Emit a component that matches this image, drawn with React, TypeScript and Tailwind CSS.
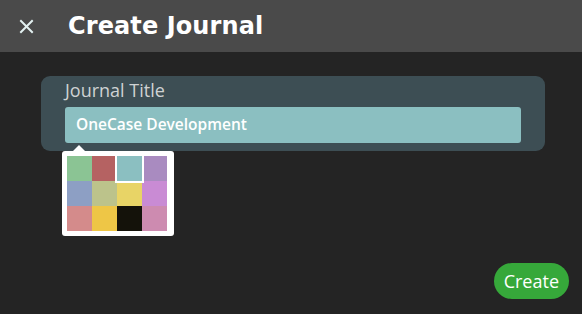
import React, { useState } from 'react'

const swatches = [
    '#8bc494', '#b56262', '#8bbfc1', '#a98bc0',
    '#8d9fc4', '#bcc38b', '#e8d466', '#c98bd4',
    '#d48b8b', '#eec646', '#14120a', '#cd8bb0',
]

const App = () => {
    const [selected, setSelected] = useState(2)
    const [title, setTitle] = useState('OneCase Development')

    return (
        <div className="w-[582px] h-[314px] bg-[#242424] flex flex-col overflow-hidden" style={{ fontFamily: '"Open Sans", sans-serif' }}>
            {/* Header */}
            <div className="h-[52px] shrink-0 bg-[#4a4a4a] flex items-center pl-[18px]">
                <button className="w-[16px] h-[16px] flex items-center justify-center text-[#e3f1f1]">
                    <svg width="15" height="15" viewBox="0 0 15 15" fill="none" stroke="currentColor" strokeWidth="2" strokeLinecap="square">
                        <path d="M2 2 L13 13 M13 2 L2 13" />
                    </svg>
                </button>
                <h1 className="ml-[34px] text-[24px] font-bold text-white tracking-[0.1px]" style={{ fontFamily: '"DejaVu Sans", sans-serif' }}>
                    Create Journal
                </h1>
            </div>

            {/* Body */}
            <div className="flex-1 flex flex-col px-[41px] pt-[24px]">
                <div className="w-[504px] h-[75px] rounded-[9px] bg-[#3d4e54] pl-[24px] pt-[2px] flex flex-col">
                    <label className="text-[18px] leading-[25px] text-[#cfd2d3]">Journal Title</label>
                    <div className="mt-[4px] w-[456px] h-[36px] rounded-[3px] bg-[#8bbfc1] flex items-center px-[11px]">
                        <input
                            value={title}
                            onChange={e => setTitle(e.target.value)}
                            className="w-full bg-transparent outline-none text-white text-[15.5px] font-semibold"
                        />
                    </div>
                </div>

                {/* Colour picker popover */}
                <div className="relative ml-[21px] w-[112px]">
                    <div className="absolute left-[11px] top-[-6px] w-0 h-0 border-l-[6px] border-r-[6px] border-b-[6px] border-l-transparent border-r-transparent border-b-white" />
                    <div className="bg-white rounded-[3px] pl-[5px] pr-[7px] py-[5px] w-[112px]">
                        <div className="flex flex-wrap w-[100px]">
                            {swatches.map((c, i) => (
                                <div
                                    key={c}
                                    onClick={() => setSelected(i)}
                                    className={`w-[25px] h-[25px] cursor-pointer ${i === selected ? 'relative z-10 outline-2 outline-white' : ''}`}
                                    style={{ backgroundColor: c }}
                                />
                            ))}
                        </div>
                    </div>
                </div>

                <div className="flex-1" />
                <div className="flex justify-end -mr-[28px] pb-[15px]">
                    <button className="h-[36px] px-[10px] rounded-full bg-[#36a83a] text-white text-[18px]">
                        Create
                    </button>
                </div>
            </div>
        </div>
    )
}

export default App
